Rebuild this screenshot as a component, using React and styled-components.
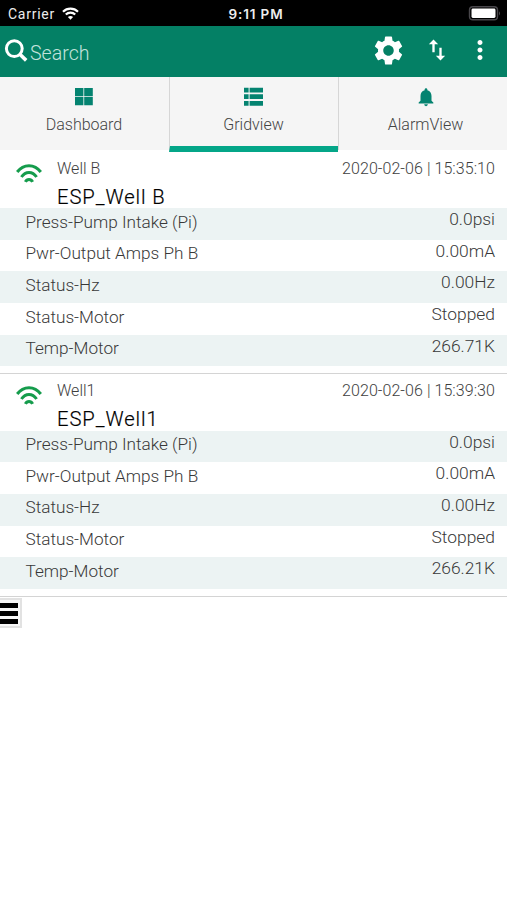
import React, { useState } from "react";
import styled, { createGlobalStyle } from "styled-components";
import { MdSettings, MdSwapVert, MdMoreVert, MdNotifications } from "react-icons/md";

const GlobalStyle = createGlobalStyle`
  * {
    box-sizing: border-box;
  }
  body {
    margin: 0;
    background: #fff;
    color: #3e3e3e;
    font-family: Roboto, "Liberation Sans", sans-serif;
    font-weight: 300;
    overflow: hidden;
  }
`;

const Screen = styled.div`
  width: 507px;
  height: 900px;
  display: flex;
  flex-direction: column;
`;

const StatusBar = styled.div`
  height: 26px;
  flex: none;
  display: grid;
  grid-template-columns: 1fr auto 1fr;
  align-items: center;
  padding: 1px 6px 0 8px;
  background: #000;
  color: #ededed;
  font-size: 14px;
  font-weight: 400;
  svg {
    display: block;
  }
`;

const Carrier = styled.div`
  display: flex;
  align-items: center;
  gap: 7px;
  letter-spacing: 0.75px;
`;

const Clock = styled.div`
  margin-left: 3px;
  font-family: Inter, "Liberation Sans", sans-serif;
  font-size: 13.5px;
  font-weight: 600;
  letter-spacing: 0.85px;
`;

const Battery = styled.div`
  justify-self: end;
`;

const Toolbar = styled.div`
  height: 50.5px;
  flex: none;
  display: flex;
  align-items: center;
  padding: 0 7px 0 4px;
  background: #048065;
  color: #fff;
  svg {
    display: block;
    flex: none;
  }
`;

const SearchInput = styled.input`
  flex: 1;
  min-width: 0;
  height: 30px;
  margin: 5px 0 0 2px;
  padding: 0;
  border: 0;
  outline: 0;
  background: transparent;
  color: #fff;
  font: inherit;
  font-size: 19.6px;
  &::placeholder {
    color: #c2e3dc;
    opacity: 1;
  }
`;

const Actions = styled.div`
  display: flex;
  align-items: center;
  padding-bottom: 2px;
`;

const IconButton = styled.button`
  display: flex;
  justify-content: center;
  width: ${(props) => props.$width}px;
  padding: 0;
  border: 0;
  background: transparent;
  color: #fff;
`;

const Tabs = styled.div`
  display: flex;
  flex: none;
  height: 75px;
`;

const Tab = styled.button`
  display: flex;
  flex-direction: column;
  align-items: center;
  width: ${(props) => props.$width}px;
  height: ${(props) => (props.$active ? 75 : 73)}px;
  padding: 9px ${(props) => (props.$indent ? 0 : 1)}px 0 ${(props) => props.$indent || 0}px;
  border: 0;
  border-left: ${(props) => (props.$divided ? "1px solid #d6d6d6" : "0")};
  border-bottom: ${(props) => (props.$active ? "6px solid #04a688" : "0")};
  background: #f5f5f5;
  color: #444;
  font: inherit;
  font-size: 16px;
  line-height: 20px;
  svg {
    display: block;
    margin-bottom: 7px;
    color: #048370;
  }
`;

const Card = styled.section`
  height: 222.5px;
  flex: none;
  border-bottom: 1.5px solid #d4d4d4;
`;

const CardHeader = styled.header`
  display: flex;
  height: 56.5px;
  padding: 7px 12px 0 16px;
  svg {
    flex: none;
    margin: 4px 15px 0 0;
  }
`;

const Names = styled.div`
  flex: 1;
`;

const WellName = styled.div`
  font-size: 16px;
  line-height: 20px;
`;

const DeviceName = styled.div`
  margin-top: 6px;
  color: #000;
  font-size: 20.2px;
  font-weight: 300;
  line-height: 25px;
  letter-spacing: 0.95px;
  -webkit-text-stroke: 0.2px #000;
`;

const Time = styled.div`
  font-size: 16px;
  line-height: 20px;
  letter-spacing: 0.07px;
`;

const Reading = styled.div`
  display: flex;
  justify-content: space-between;
  height: 31.7px;
  padding: 0 12px 0 25.5px;
  color: #383838;
  font-size: 17.2px;
  line-height: 22px;
  background: ${(props) => (props.$shaded ? "#ecf3f3" : "#fff")};
`;

const Label = styled.span`
  padding-top: 2.5px;
`;

const Value = styled.span`
  font-size: 17.4px;
`;

const MenuTab = styled.button`
  display: flex;
  flex-direction: column;
  gap: 3px;
  width: 22px;
  height: 30px;
  margin-top: 1.5px;
  padding: 3px 4px 0 0;
  border: solid #e2e2e2;
  border-width: 2px 2px 2px 0;
  background: #f8f8f8;
`;

const MenuLine = styled.span`
  width: 18px;
  height: 5px;
  background: #000;
`;

const CarrierWifi = () => (
  <svg width="17" height="13" viewBox="0 0 17 13" fill="none" stroke="#fff" strokeWidth="2.2">
    <path d="M1 4.7a10.6 10.6 0 0 1 15 0" />
    <path d="M3.8 7.6a6.6 6.6 0 0 1 9.4 0" />
    <path d="M8.5 12.8 5.9 10.1a3.8 3.8 0 0 1 5.2 0z" fill="#fff" stroke="none" />
  </svg>
);

const BatteryIcon = () => (
  <svg width="33" height="15" viewBox="0 0 33 15">
    <rect x="1.5" y="0.8" width="28" height="13" rx="3.4" fill="none" stroke="#49474b" strokeWidth="1.4" />
    <rect x="3.5" y="2.6" width="24" height="9.4" rx="1.4" fill="#fff" />
    <path d="M31 5.2q2 2.1 0 4.2z" fill="#49474b" />
  </svg>
);

const SearchIcon = () => (
  <svg width="24" height="24" viewBox="0 0 24 24" fill="none" stroke="#fff" strokeWidth="3">
    <circle cx="10.3" cy="9.6" r="7.9" />
    <path d="M15.6 15l6.6 6.4" strokeWidth="3.6" />
  </svg>
);

const DashboardIcon = () => (
  <svg width="18" height="22" viewBox="0 0 18 22" fill="currentColor">
    <path d="M0 2h8.4v8.2H0zM9.2 2h8.6v8.2H9.2zM0 11h8.4v8.3H0zM9.2 11h8.6v8.3H9.2z" />
  </svg>
);

const GridIcon = () => (
  <svg width="19" height="22" viewBox="0 0 19 22" fill="currentColor">
    <path d="M0 1.7h4.6v4.8H0zM5.6 1.7H19v4.8H5.6zM0 8.3h4.6v4.8H0zM5.6 8.3H19v4.8H5.6zM0 14.9h4.6v4.8H0zM5.6 14.9H19v4.8H5.6z" />
  </svg>
);

const BellIcon = styled(MdNotifications)`
  width: 24px;
  height: 22px;
`;

const SignalIcon = () => (
  <svg width="26" height="20" viewBox="0 0 26 20" fill="none" stroke="#159c4c" strokeWidth="3">
    <path d="M1.2 9C7.5.5 18.5.5 24.8 9" />
    <path d="M5.4 14C9.5 8 16.5 8 20.6 14" />
    <path d="M9.4 18.8C11 15.6 15 15.6 16.6 18.8" />
  </svg>
);

const wells = [
  {
    name: "Well B",
    device: "ESP_Well B",
    time: "2020-02-06 | 15:35:10",
    readings: [
      ["Press-Pump Intake (Pi)", "0.0psi"],
      ["Pwr-Output Amps Ph B", "0.00mA"],
      ["Status-Hz", "0.00Hz"],
      ["Status-Motor", "Stopped"],
      ["Temp-Motor", "266.71K"],
    ],
  },
  {
    name: "Well1",
    device: "ESP_Well1",
    time: "2020-02-06 | 15:39:30",
    readings: [
      ["Press-Pump Intake (Pi)", "0.0psi"],
      ["Pwr-Output Amps Ph B", "0.00mA"],
      ["Status-Hz", "0.00Hz"],
      ["Status-Motor", "Stopped"],
      ["Temp-Motor", "266.21K"],
    ],
  },
];

const App = () => {
  const [search, setSearch] = useState("");
  const [tab, setTab] = useState("grid");

  return (
    <Screen>
      <GlobalStyle />
      <StatusBar>
        <Carrier>
          Carrier
          <CarrierWifi />
        </Carrier>
        <Clock>9:11 PM</Clock>
        <Battery>
          <BatteryIcon />
        </Battery>
      </StatusBar>

      <Toolbar>
        <SearchIcon />
        <SearchInput
          placeholder="Search"
          value={search}
          onChange={(e) => setSearch(e.target.value)}
        />
        <Actions>
          <IconButton $width={52}>
            <MdSettings size={35} />
          </IconButton>
          <IconButton $width={46}>
            <MdSwapVert size={28} />
          </IconButton>
          <IconButton $width={40}>
            <MdMoreVert size={30} />
          </IconButton>
        </Actions>
      </Toolbar>

      <Tabs>
        <Tab
          $width={169}
          $active={tab === "dashboard"}
          onClick={() => setTab("dashboard")}
        >
          <DashboardIcon />
          Dashboard
        </Tab>
        <Tab
          $divided
          $width={169}
          $active={tab === "grid"}
          onClick={() => setTab("grid")}
        >
          <GridIcon />
          Gridview
        </Tab>
        <Tab
          $divided
          $width={169}
          $indent={5}
          $active={tab === "alarm"}
          onClick={() => setTab("alarm")}
        >
          <BellIcon />
          AlarmView
        </Tab>
      </Tabs>

      {wells.map((well) => (
        <Card key={well.name}>
          <CardHeader>
            <SignalIcon />
            <Names>
              <WellName>{well.name}</WellName>
              <DeviceName>{well.device}</DeviceName>
            </Names>
            <Time>{well.time}</Time>
          </CardHeader>
          {well.readings.map(([label, value], i) => (
            <Reading key={label} $shaded={i % 2 === 0}>
              <Label>{label}</Label>
              <Value>{value}</Value>
            </Reading>
          ))}
        </Card>
      ))}

      <MenuTab>
        <MenuLine />
        <MenuLine />
        <MenuLine />
      </MenuTab>
    </Screen>
  );
};

export default App;
